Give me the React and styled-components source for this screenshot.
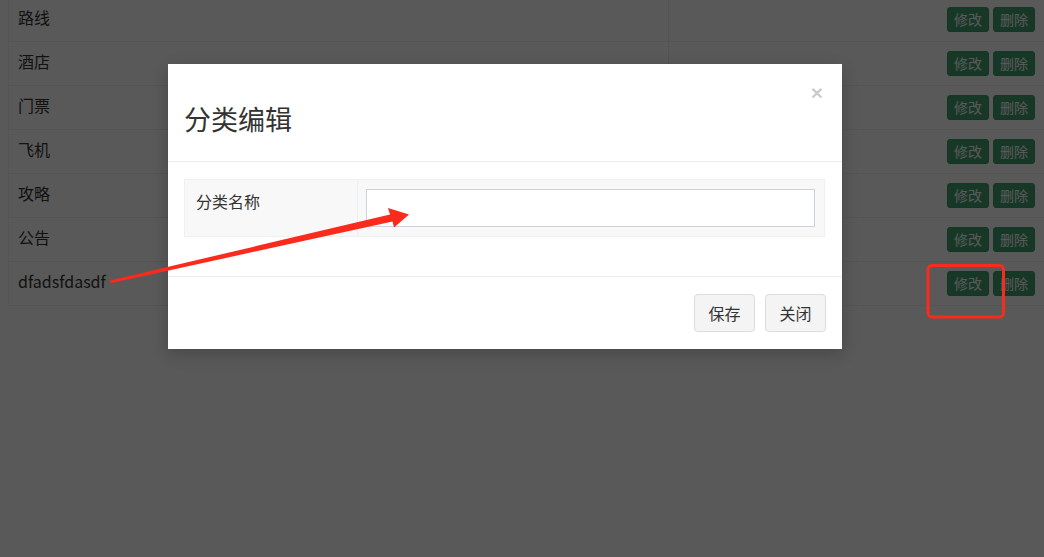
import React from "react";
import styled, { createGlobalStyle } from "styled-components";

const Global = createGlobalStyle`
  html, body { margin: 0; padding: 0; background: #fff; }
  body {
    width: 1044px; height: 557px; overflow: hidden; position: relative;
    font-family: "Noto Sans CJK SC", "Noto Sans", sans-serif;
    color: #333;
  }
  * { box-sizing: border-box; }
`;

const Page = styled.div`
  padding-left: 8px;
  margin-top: -3px;
`;

const Table = styled.div`
  width: 1036px;
  border-left: 1px solid #efefef;
  border-top: 1px solid #efefef;
`;

const Row = styled.div`
  display: grid;
  grid-template-columns: 660px 1fr;
  height: 44px;
  border-bottom: 1px solid #efefef;
`;

const NameCell = styled.div`
  display: flex;
  align-items: center;
  padding: 0 0 5px 9px;
  font-size: 16px;
  color: #333;
  border-right: 1px solid #efefef;
`;

const ActionCell = styled.div`
  display: flex;
  align-items: center;
  justify-content: flex-end;
  gap: 4px;
  padding: 0 9px 1px 0;
`;

const SmallBtn = styled.button`
  font-family: inherit;
  font-size: 14px;
  line-height: 21px;
  padding: 1px 6px;
  height: 25px;
  border: 1px solid #3e9a6c;
  border-radius: 3px;
  background: #42a070;
  color: #fff;
  cursor: pointer;
`;

const Backdrop = styled.div`
  position: absolute;
  inset: 0;
  background: rgba(0, 0, 0, 0.65);
`;

const Modal = styled.div`
  position: absolute;
  left: 168px;
  top: 64px;
  width: 674px;
  height: 285px;
  background: #fff;
  box-shadow: 0 5px 15px rgba(0, 0, 0, 0.2);
  display: flex;
  flex-direction: column;
`;

const Header = styled.div`
  position: relative;
  padding: 37px 16px 24px 16px;
  border-bottom: 1px solid #ededed;
`;

const Title = styled.h4`
  margin: 0;
  font-size: 27px;
  line-height: 36px;
  font-weight: 400;
  color: #333;
`;

const Close = styled.span`
  position: absolute;
  right: 19px;
  top: 18px;
  font-family: "Liberation Sans", Arial, sans-serif;
  font-size: 21px;
  line-height: 21px;
  font-weight: 700;
  color: #000;
  opacity: 0.2;
`;

const Body = styled.div`
  padding: 17px 17px 39px 16px;
  border-bottom: 1px solid #ededed;
`;

const FormRow = styled.div`
  display: grid;
  grid-template-columns: 173px 1fr;
  background: #f8f8f8;
  border: 1px solid #f0f0f0;
`;

const Label = styled.div`
  padding: 9px 11px;
  font-size: 16px;
  line-height: 24px;
  color: #333;
  border-right: 1px solid #eeeeee;
`;

const InputCell = styled.div`
  padding: 9px 9px 9px 8px;
`;

const Input = styled.input`
  display: block;
  width: 100%;
  height: 38px;
  border: 1px solid #cdd3dd;
  background: #fff;
  outline: none;
  font-family: inherit;
  font-size: 16px;
`;

const Footer = styled.div`
  display: flex;
  justify-content: flex-end;
  gap: 10px;
  padding: 17px 16px 18px;
`;

const FooterBtn = styled.button`
  font-family: inherit;
  font-size: 16px;
  line-height: 24px;
  padding: 6px 13.5px;
  height: 38px;
  border: 1px solid #dcdcdc;
  border-radius: 4px;
  background: #f4f4f4;
  color: #333;
`;

const Annotations = styled.svg`
  position: absolute;
  left: 0;
  top: 0;
  width: 1044px;
  height: 557px;
  pointer-events: none;
`;

const rows = ["路线", "酒店", "门票", "飞机", "攻略", "公告", "dfadsfdasdf"];

export default function App() {
  return (
    <>
      <Global />
      <Page>
        <Table>
          {rows.map((r) => (
            <Row key={r}>
              <NameCell>{r}</NameCell>
              <ActionCell>
                <SmallBtn>修改</SmallBtn>
                <SmallBtn>删除</SmallBtn>
              </ActionCell>
            </Row>
          ))}
        </Table>
      </Page>
      <Backdrop />
      <Modal>
        <Header>
          <Title>分类编辑</Title>
          <Close>×</Close>
        </Header>
        <Body>
          <FormRow>
            <Label>分类名称</Label>
            <InputCell>
              <Input />
            </InputCell>
          </FormRow>
        </Body>
        <Footer>
          <FooterBtn>保存</FooterBtn>
          <FooterBtn>关闭</FooterBtn>
        </Footer>
      </Modal>
      <Annotations viewBox="0 0 1044 557">
        <polygon
          points="110,280.6 390,214.5 388,208 409,214.5 394,227.5 392.5,221.5 110.5,283.2"
          fill="#fa2a1c"
        />
        <rect x="928" y="265.5" width="75.5" height="51.5" rx="4" ry="4" fill="none" stroke="#fa2a1c" strokeWidth="3" />
      </Annotations>
    </>
  );
}
